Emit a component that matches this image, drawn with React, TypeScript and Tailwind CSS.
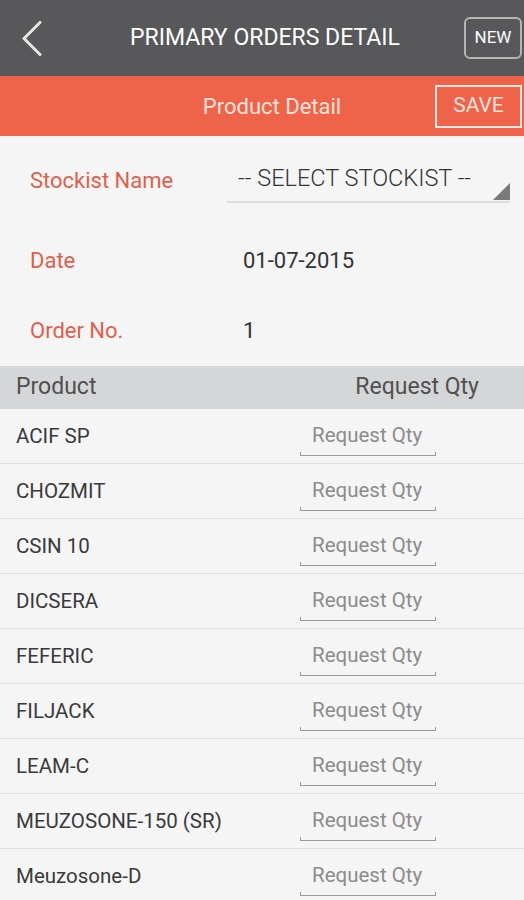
const PRODUCTS = [
  'ACIF SP',
  'CHOZMIT',
  'CSIN 10',
  'DICSERA',
  'FEFERIC',
  'FILJACK',
  'LEAM-C',
  'MEUZOSONE-150 (SR)',
  'Meuzosone-D',
];

const QtyInput = () => {
  return (
    <div className="flex flex-col w-[136px] h-[36px] mt-[3px]">
      <div className="flex-1 flex items-center pl-[12px] text-[20.5px] text-[#8c8c8c]">Request Qty</div>
      <div className="h-[4px] border-x border-b border-[#9a9a9a]" />
    </div>
  );
};

const App = () => {
  return (
    <div className="w-[524px] h-[900px] overflow-hidden bg-[#f5f5f5] font-['Roboto',sans-serif]">
      <div className="h-[76px] bg-[#58585a] flex items-center">
        <div className="w-[62px] flex pl-[22px]">
          <svg width="20" height="35" viewBox="0 0 20 35" fill="none">
            <polyline points="18,1.5 2,17.5 18,33.5" stroke="#e6e6e6" strokeWidth="3" strokeLinecap="round" strokeLinejoin="round" />
          </svg>
        </div>
        <div className="flex-1 pl-[6px] text-center text-white text-[23px]">PRIMARY ORDERS DETAIL</div>
        <div className="w-[62px] flex justify-end pr-[2px]">
          <div className="w-[58px] h-[42px] border-2 border-[#b5b5b5] rounded-[6px] flex items-center justify-center text-white text-[17px]">
            NEW
          </div>
        </div>
      </div>

      <div className="h-[60px] bg-[#ef634a] flex items-center">
        <div className="flex-1 pl-[109px] text-center text-[#fde3dc] text-[22px]">Product Detail</div>
        <div className="w-[87px] h-[43px] mr-[2px] border-2 border-[#fde8e2] flex items-center justify-center text-[#fde3dc] text-[21px]">
          SAVE
        </div>
      </div>

      <div className="pt-[4px] pb-[6px]">
        <div className="h-[80px] flex items-center">
          <div className="w-[227px] pl-[30px] text-[22px] text-[#df604b]">Stockist Name</div>
          <div className="w-[283px] h-[46px] border-b-2 border-[#dcdcdc] flex items-center pl-[11px] relative">
            <span className="text-[23.5px] font-light text-[#333333]">-- SELECT STOCKIST --</span>
            <svg className="absolute right-0 bottom-[1px]" width="17" height="17" viewBox="0 0 17 17">
              <polygon points="17,0 17,17 0,17" fill="#7a7a7a" />
            </svg>
          </div>
        </div>
        <div className="h-[80px] flex items-center">
          <div className="w-[227px] pl-[30px] text-[22px] text-[#df604b]">Date</div>
          <div className="pl-[16px] text-[22px] text-[#333333]">01-07-2015</div>
        </div>
        <div className="h-[60px] flex items-center">
          <div className="w-[227px] pl-[30px] text-[22px] text-[#df604b]">Order No.</div>
          <div className="pl-[16px] text-[22px] text-[#333333]">1</div>
        </div>
      </div>

      <div className="h-[43px] bg-[#d5d6d8] flex items-center justify-between pl-[16px] pr-[45px] text-[23px] text-[#505050]">
        <span>Product</span>
        <span>Request Qty</span>
      </div>

      {PRODUCTS.map((name) => (
        <div key={name} className="h-[55px] border-b border-[#dedede] flex items-center">
          <div className="w-[300px] pl-[16px] text-[20.5px] text-[#3a3a3a]">{name}</div>
          <QtyInput />
        </div>
      ))}
    </div>
  );
};

export default App;
